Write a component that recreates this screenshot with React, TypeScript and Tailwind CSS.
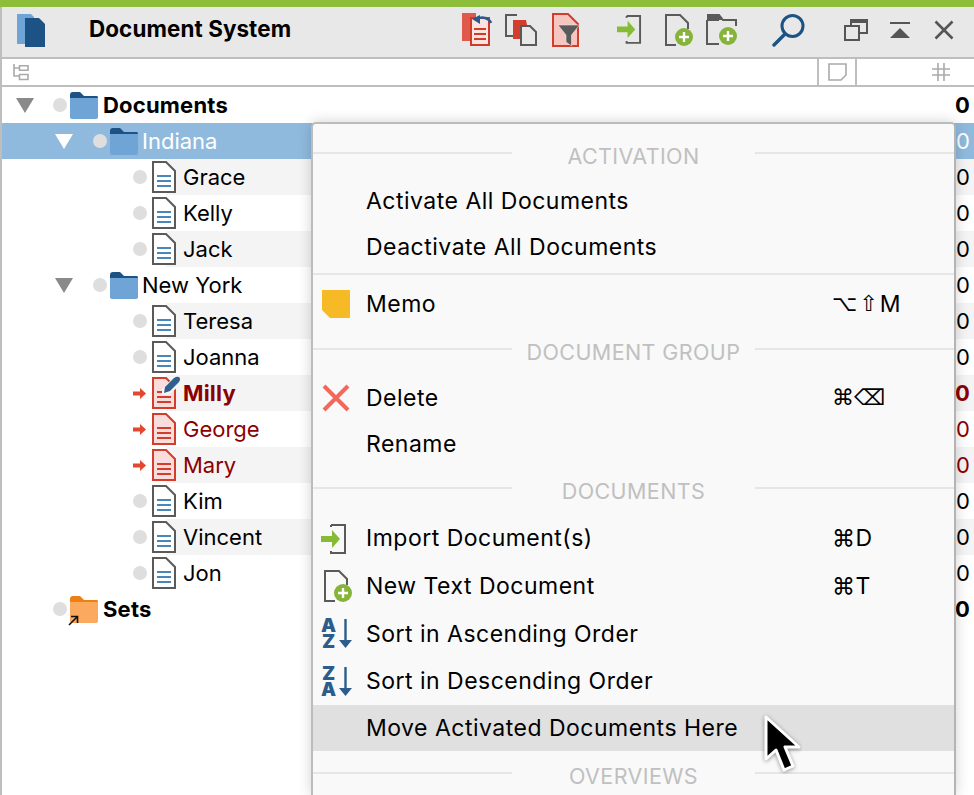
import type { ReactNode } from 'react';

const FONT = "font-['Inter','Liberation_Sans',sans-serif]";

function AppLogo() {
  return (
    <svg width="30" height="34" viewBox="0 0 30 34">
      <path d="M1 1h14l3 3v27H1z" fill="#6fa5d6" />
      <path d="M9 5h14l6 6v23H9z" fill="#1c5384" />
    </svg>
  );
}

function RedCopyIcon() {
  return (
    <svg width="32" height="34" viewBox="0 0 32 34">
      <path d="M0 0h14v28H0z" fill="#e05a4c" />
      <path d="M9 5h18v27H9z" fill="#fbe3e0" stroke="#cf3a2b" strokeWidth="2" />
      <path d="M12 16h12M12 21h12M12 26h12" stroke="#cf3a2b" strokeWidth="2" />
      <path d="M29 10C27 5 20 3 15 6" fill="none" stroke="#2a5b8c" strokeWidth="2.6" />
      <path d="M10 6l8-4v9z" fill="#2a5b8c" />
    </svg>
  );
}

function CopyIcon() {
  return (
    <svg width="34" height="34" viewBox="0 0 34 34">
      <path d="M13 2H2v21h7" fill="none" stroke="#5a5a5a" strokeWidth="2" />
      <path d="M9 7h13l1 5h-6v14H9z" fill="#d43c2c" />
      <path d="M17 13h9l6 6v13H17z" fill="#e8e8e8" stroke="#5a5a5a" strokeWidth="2" />
    </svg>
  );
}

function FilterDocIcon() {
  return (
    <svg width="28" height="34" viewBox="0 0 28 34">
      <path d="M1 1h15l10 10v22H1z" fill="#f6c5c0" stroke="#d43c2c" strokeWidth="2" />
      <path d="M6 12h21.500l-8 10v11l-5.500-4v-7z" fill="#5a5a5a" stroke="#e8e8e8" strokeWidth="0.6" />
    </svg>
  );
}

function ImportIcon({ size = 26 }: { size?: number }) {
  return (
    <svg width={size} height={(size * 30) / 26} viewBox="0 0 26 30">
      <path d="M10 1h14v28H10v-2" fill="none" stroke="#5a5a5a" strokeWidth="2" />
      <path d="M10 1v2" stroke="#5a5a5a" strokeWidth="2" />
      <path d="M0 12h11V6l8 9-8 9v-6H0z" fill="#86bb35" />
    </svg>
  );
}

function PlusBadge({ cx, cy }: { cx: number; cy: number }) {
  return (
    <g>
      <circle cx={cx} cy={cy} r="9" fill="#86b33a" />
      <path d={`M${cx - 5} ${cy}h10M${cx} ${cy - 5}v10`} stroke="#fff" strokeWidth="2.4" />
    </g>
  );
}

function NewDocIcon({ size = 30 }: { size?: number }) {
  return (
    <svg width={size} height={(size * 34) / 30} viewBox="0 0 30 34">
      <path d="M12 32H2V2h14l8 8v6" fill="none" stroke="#5a5a5a" strokeWidth="2" />
      <PlusBadge cx={20} cy={24} />
    </svg>
  );
}

function NewFolderIcon() {
  return (
    <svg width="32" height="32" viewBox="0 0 32 32">
      <path d="M1 1h12l4 5h13v6M1 6h12" fill="none" stroke="#5a5a5a" strokeWidth="2" />
      <path d="M1 1h12l4 5H1z" fill="#5a5a5a" />
      <path d="M1 6v24h12" fill="none" stroke="#5a5a5a" strokeWidth="2" />
      <PlusBadge cx={22} cy={22} />
    </svg>
  );
}

function SearchIcon() {
  return (
    <svg width="34" height="34" viewBox="0 0 34 34">
      <circle cx="20.5" cy="13" r="10.5" fill="none" stroke="#1c5384" strokeWidth="3" />
      <path d="M13 21 2 32" stroke="#1c5384" strokeWidth="3.4" strokeLinecap="round" />
    </svg>
  );
}

function RestoreIcon() {
  return (
    <svg width="24" height="22" viewBox="0 0 24 22">
      <path d="M7 6V1h16v13h-8" fill="none" stroke="#555" strokeWidth="2" />
      <path d="M1 7h14v14H1z" fill="none" stroke="#555" strokeWidth="2" />
      <path d="M7 1h16v3H7z" fill="#555" />
    </svg>
  );
}

function CollapseIcon() {
  return (
    <svg width="20" height="16" viewBox="0 0 20 16">
      <path d="M0 1h20" stroke="#555" strokeWidth="2" />
      <path d="M10 6l10 10H0z" fill="#555" />
    </svg>
  );
}

function CloseIcon() {
  return (
    <svg width="20" height="20" viewBox="0 0 20 20">
      <path d="M1.500 1.500l17 17M18.500 1.500l-17 17" stroke="#555" strokeWidth="2.6" />
    </svg>
  );
}

function TreeHeadIcon() {
  return (
    <svg width="16" height="17" viewBox="0 0 16 17">
      <path d="M1 0v12h5M1 4h5" fill="none" stroke="#aaa" strokeWidth="1.6" />
      <path d="M6.500 1.800h8.500v4.500H6.500zM6.500 10.500h8.500v5H6.500z" fill="none" stroke="#aaa" strokeWidth="1.6" />
    </svg>
  );
}

function MemoHeadIcon() {
  return (
    <svg width="19" height="18" viewBox="0 0 19 18">
      <path d="M1 1h17v11l-5 5H1z" fill="none" stroke="#aaa" strokeWidth="1.6" />
    </svg>
  );
}

function HashHeadIcon() {
  return (
    <svg width="18" height="18" viewBox="0 0 18 18">
      <path d="M6 0v18M12 0v18M0 6h18M0 12h18" stroke="#aaa" strokeWidth="1.6" />
    </svg>
  );
}

function FolderIcon({ tone = 'blue' }: { tone?: 'blue' | 'orange' }) {
  const top = tone === 'orange' ? '#ee7f14' : '#1c5384';
  const body = tone === 'orange' ? '#fba95e' : '#6fa5d6';
  return (
    <svg width="28" height="27" viewBox="0 0 28 27" className="shrink-0">
      <path d="M0 3q0-3 3-3h7l4 4h13q1 0 1 2v3H0z" fill={top} />
      <path d="M0 6h28v19q0 2-2 2H2q-2 0-2-2z" fill={body} />
    </svg>
  );
}

function DocIcon({ red = false }: { red?: boolean }) {
  const stroke = red ? '#d43c2c' : '#5a5a5a';
  const line = red ? '#d43c2c' : '#4a86b8';
  return (
    <svg width="24" height="32" viewBox="0 0 24 32" className="shrink-0">
      <path d="M1 1h13l9 9v21H1z" fill={red ? '#f9dcdc' : '#fff'} stroke={stroke} strokeWidth="2" />
      <path d="M5 15h14M5 20h14M5 25h14" stroke={line} strokeWidth="2" />
    </svg>
  );
}

function Triangle({ white = false }: { white?: boolean }) {
  return (
    <svg width="18" height="15" viewBox="0 0 18 15" className="shrink-0">
      <path d="M0 0h18L9 15z" fill={white ? '#fff' : '#8a8a8a'} />
    </svg>
  );
}

function RedArrow() {
  return (
    <svg width="13" height="11" viewBox="0 0 13 11" className="shrink-0">
      <path d="M0 3.500h7V0l6 5.500-6 5.500V7.500H0z" fill="#e2472f" />
    </svg>
  );
}

function Dot() {
  return <span className="block h-[14px] w-[14px] shrink-0 rounded-full bg-[#dedede]" />;
}

type Row = {
  name: string;
  level: 0 | 1 | 2;
  kind?: 'folder' | 'sets';
  striped?: boolean;
  selected?: boolean;
  active?: boolean;
  bold?: boolean;
  pen?: boolean;
};

const rows: Row[] = [
  { name: 'Documents', level: 0, kind: 'folder', bold: true },
  { name: 'Indiana', level: 1, kind: 'folder', selected: true },
  { name: 'Grace', level: 2, striped: true },
  { name: 'Kelly', level: 2 },
  { name: 'Jack', level: 2, striped: true },
  { name: 'New York', level: 1, kind: 'folder' },
  { name: 'Teresa', level: 2, striped: true },
  { name: 'Joanna', level: 2 },
  { name: 'Milly', level: 2, striped: true, active: true, bold: true, pen: true },
  { name: 'George', level: 2, active: true },
  { name: 'Mary', level: 2, striped: true, active: true },
  { name: 'Kim', level: 2 },
  { name: 'Vincent', level: 2, striped: true },
  { name: 'Jon', level: 2 },
  { name: 'Sets', level: 0, kind: 'sets', bold: true },
];

function TreeRow({ row }: { row: Row }) {
  const textColor = row.selected ? 'text-white' : row.active ? 'text-[#8b0000]' : 'text-black';
  const weight = row.bold ? 'font-bold tracking-[0.2px]' : 'font-normal';
  const background = row.selected
    ? 'bg-[#8fbade]'
    : row.striped
      ? 'bg-[linear-gradient(to_right,transparent_164px,#f4f4f4_164px)]'
      : '';
  const isFolder = row.kind === 'folder' || row.kind === 'sets';

  return (
    <div className={`flex h-9 items-center ${background}`}>
      {row.level === 0 && (
        <div className="ml-[14px] flex w-[37px] shrink-0">{row.kind === 'folder' && <Triangle />}</div>
      )}
      {row.level === 1 && (
        <div className="ml-[53px] flex w-[38px] shrink-0">
          <Triangle white={row.selected} />
        </div>
      )}
      {row.level === 2 && (
        <div className="ml-[129px] flex w-[21px] shrink-0 items-center pl-[2px]">
          {row.active ? <RedArrow /> : <Dot />}
        </div>
      )}
      {row.level !== 2 && <Dot />}
      {isFolder ? (
        <div className={`relative ml-[3px] flex shrink-0 ${row.level === 0 ? 'w-[33px]' : 'w-[32px]'}`}>
          <FolderIcon tone={row.kind === 'sets' ? 'orange' : 'blue'} />
          {row.kind === 'sets' && (
            <svg width="11" height="11" viewBox="0 0 11 11" className="absolute -bottom-[3px] -left-[2px]">
              <path d="M1 10l8-8M3 1.500h6.500V8" fill="none" stroke="#111" strokeWidth="1.600" />
            </svg>
          )}
        </div>
      ) : (
        <div className="relative flex w-[31px] shrink-0">
          <DocIcon red={row.active} />
          {row.pen && (
            <svg width="20" height="20" viewBox="0 0 20 20" className="absolute -top-[1px] left-[10px]">
              <path d="M0 13 12 1h7v7L7 19H0z" fill="#f4f4f4" />
              <path d="M2 17l1-6L12 2q3-2 5-1 2 2 0 5l-9 9z" fill="#2f6090" />
            </svg>
          )}
        </div>
      )}
      <span className={`text-[22px] leading-none ${textColor} ${weight}`}>{row.name}</span>
      <span className={`ml-auto pr-[4px] text-[22px] leading-none ${weight} ${textColor}`}>0</span>
    </div>
  );
}

function SectionLabel({ label, height }: { label: string; height: string }) {
  return (
    <div className={`flex items-center ${height}`}>
      <span className="h-[2px] w-[199px] shrink-0 -translate-y-[4px] bg-[#e6e6e6]" />
      <span className="flex-1 text-center text-[21.5px] leading-none tracking-[0.4px] text-[#c0c0c0]">{label}</span>
      <span className="h-[2px] w-[199px] shrink-0 -translate-y-[4px] bg-[#e6e6e6]" />
    </div>
  );
}

function MenuItem({
  label,
  icon,
  shortcut,
  height = 'h-[46px]',
  highlight = false,
}: {
  label: string;
  icon?: ReactNode;
  shortcut?: ReactNode;
  height?: string;
  highlight?: boolean;
}) {
  return (
    <div className={`flex items-center ${height} ${highlight ? 'bg-[#e0e0e0]' : ''}`}>
      <div className="flex w-[53px] shrink-0 justify-center pr-[7px]">{icon}</div>
      <span className="flex-1 text-[23px] leading-none tracking-[0.49px] text-black">{label}</span>
      {shortcut && (
        <span className="flex w-[122px] shrink-0 items-center text-[23px] leading-none tracking-[0.5px] text-black">
          {shortcut}
        </span>
      )}
    </div>
  );
}

function SortIcon({ descending = false }: { descending?: boolean }) {
  const first = descending ? 'Z' : 'A';
  const second = descending ? 'A' : 'Z';
  return (
    <div className="flex h-[32px] w-[32px] items-center gap-[2px] text-[#2b5c8c]">
      <div className="flex w-[17px] flex-col items-center text-[19px] font-black leading-[16px]">
        <span>{first}</span>
        <span>{second}</span>
      </div>
      <svg width="13" height="30" viewBox="0 0 13 30">
        <path d="M6.500 0v24" stroke="#2b5c8c" strokeWidth="2.400" />
        <path d="M0 21h13l-6.500 8z" fill="#2b5c8c" />
      </svg>
    </div>
  );
}

function ContextMenu() {
  return (
    <div className="absolute bottom-0 left-[311px] top-[122px] w-[645px] overflow-hidden rounded-t-[5px] border-x-2 border-t-2 border-[#bcbcbc] border-r-[#b4b4b4] bg-[#f9f9f9] shadow-[0_0_14px_rgba(0,0,0,0.18)]">
      <SectionLabel label="ACTIVATION" height="h-[54px] pt-[12px]" />
      <MenuItem label="Activate All Documents" />
      <MenuItem label="Deactivate All Documents" />
      <div className="mt-[3px] h-[2px] bg-[#e6e6e6]" />
      <MenuItem
        label="Memo"
        height="h-[58px]"
        icon={
          <svg width="28" height="28" viewBox="0 0 28 28">
            <path d="M0 0h28v28H8l-8-8z" fill="#f6ba26" />
          </svg>
        }
        shortcut={
          <>
            <span className="font-['DejaVu_Sans'] text-[22px] tracking-[2px]">⌥⇧</span>
            <span>M</span>
          </>
        }
      />
      <SectionLabel label="DOCUMENT GROUP" height="h-[42px] pb-[3px]" />
      <MenuItem
        label="Delete"
        icon={
          <svg width="28" height="28" viewBox="0 0 28 28">
            <path d="M2 2l24 24M26 2 2 26" stroke="#f2695c" strokeWidth="4" />
          </svg>
        }
        shortcut={<span className="font-['DejaVu_Sans'] text-[22px] tracking-normal">⌘⌫</span>}
      />
      <MenuItem label="Rename" height="h-[47px]" />
      <SectionLabel label="DOCUMENTS" height="h-[47px]" />
      <MenuItem
        label="Import Document(s)"
        height="h-[47px]"
        icon={
          <div className="mr-[4px] flex">
            <ImportIcon />
          </div>
        }
        shortcut="⌘D"
      />
      <MenuItem
        label="New Text Document"
        height="h-[48px]"
        icon={
          <div className="ml-[4px] flex">
            <NewDocIcon />
          </div>
        }
        shortcut="⌘T"
      />
      <MenuItem label="Sort in Ascending Order" height="h-[48px]" icon={<SortIcon />} />
      <MenuItem label="Sort in Descending Order" height="h-[47px]" icon={<SortIcon descending />} />
      <MenuItem label="Move Activated Documents Here" highlight />
      <SectionLabel label="OVERVIEWS" height="h-[52px]" />
    </div>
  );
}

export default function App() {
  return (
    <div className={`relative h-[795px] w-[974px] overflow-hidden bg-white ${FONT}`}>
      <div className="h-[7px] bg-[#8cbe3a]" />
      <div className="h-[788px] border-l-2 border-[#bebebe]">
        <header className="flex h-[50px] items-center bg-[#e8e8e8] pb-[5px]">
          <div className="ml-[14px] w-[73px] shrink-0">
            <AppLogo />
          </div>
          <h1 className="w-[373px] shrink-0 text-[22.4px] font-bold leading-none tracking-[0.1px] text-black">
            Document System
          </h1>
          <div className="flex w-[42px] shrink-0"><RedCopyIcon /></div>
          <div className="flex w-[48px] shrink-0"><CopyIcon /></div>
          <div className="flex w-[65px] shrink-0"><FilterDocIcon /></div>
          <div className="flex w-[47px] shrink-0"><ImportIcon size={25} /></div>
          <div className="flex w-[42px] shrink-0"><NewDocIcon /></div>
          <div className="flex w-[66px] shrink-0"><NewFolderIcon /></div>
          <div className="flex w-[72px] shrink-0"><SearchIcon /></div>
          <div className="flex w-[46px] shrink-0"><RestoreIcon /></div>
          <div className="flex w-[44px] shrink-0"><CollapseIcon /></div>
          <CloseIcon />
        </header>
        <div className="flex h-[30px] items-center border-y-2 border-[#bebebe]">
          <div className="ml-[11px] flex-1"><TreeHeadIcon /></div>
          <div className="flex h-full w-[40px] items-center justify-center border-x-2 border-[#bebebe]">
            <MemoHeadIcon />
          </div>
          <div className="flex w-[117px] justify-end pr-[24px]"><HashHeadIcon /></div>
        </div>
        {rows.map((row) => (
          <TreeRow key={row.name} row={row} />
        ))}
      </div>
      <ContextMenu />
      <svg width="42" height="62" viewBox="0 0 42 62" className="absolute left-[760px] top-[712px]">
        <path d="M6 5v42l10-9 8 20 9-4-8-19h14z" fill="#000" stroke="#fff" strokeWidth="3" strokeLinejoin="round" style={{ filter: 'drop-shadow(0 1px 2px rgba(0,0,0,.4))' }} />
      </svg>
    </div>
  );
}
